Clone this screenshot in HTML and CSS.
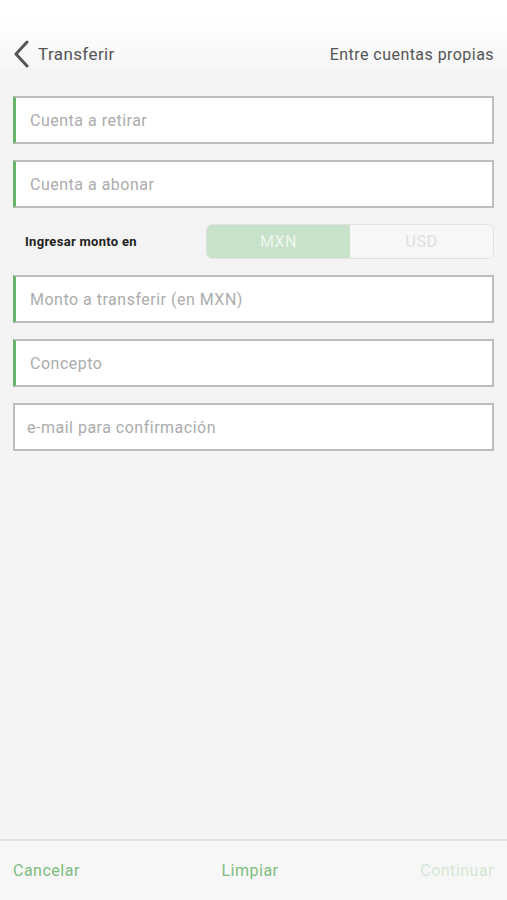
FILE: index.html
```html
<!DOCTYPE html>
<html lang="es">
<head>
    <meta charset="UTF-8">
    <meta name="viewport" content="width=device-width, initial-scale=1.0">
    <title>Transferir</title>
    <link rel="stylesheet" href="styles.css">
</head>
<body>
    <div class="page">
        <div class="topbar">
            <a class="back" href="#">
                <svg width="18" height="28" viewBox="0 0 18 28">
                    <path d="M15 2 L4 14 L15 26" fill="none" stroke="#555" stroke-width="3" stroke-linecap="round" stroke-linejoin="round"/>
                </svg>
                <span>Transferir</span>
            </a>
            <span class="subtitle">Entre cuentas propias</span>
        </div>

        <form class="form">
            <input class="field required" type="text" placeholder="Cuenta a retirar">
            <input class="field required" type="text" placeholder="Cuenta a abonar">

            <div class="currency-row">
                <span class="currency-label">Ingresar monto en</span>
                <div class="toggle">
                    <button type="button" class="toggle-opt active">MXN</button>
                    <button type="button" class="toggle-opt">USD</button>
                </div>
            </div>

            <input class="field required" type="text" placeholder="Monto a transferir (en MXN)">
            <input class="field required" type="text" placeholder="Concepto">
            <input class="field" type="email" placeholder="e-mail para confirmación">
        </form>

        <div class="footer">
            <a href="#" class="action">Cancelar</a>
            <a href="#" class="action">Limpiar</a>
            <a href="#" class="action disabled">Continuar</a>
        </div>
    </div>
</body>
</html>
```

FILE: styles.css
```css
body {
    margin: 0;
    font-family: Roboto, "Liberation Sans", sans-serif;
    background-color: #f4f4f4;
}

.page {
    min-height: 900px;
    display: flex;
    flex-direction: column;
}

/* header */
.topbar {
    background: linear-gradient(#ffffff 0px, #ffffff 18px, #f4f4f4 80px);
    padding: 40px 13px 0 12px;
    height: 28px;
    display: flex;
    align-items: center;
    justify-content: space-between;
}

.back {
    display: flex;
    align-items: center;
    gap: 8px;
    color: #555;
    text-decoration: none;
    font-size: 17px;
    letter-spacing: 0.4px;
}

.back svg {
    display: block;
}

.subtitle {
    color: #555;
    font-size: 16px;
    letter-spacing: 0.45px;
}

/* form */
.form {
    padding: 28px 13px 0 13px;
    display: flex;
    flex-direction: column;
    gap: 16px;
}

.field {
    box-sizing: border-box;
    height: 48px;
    width: 100%;
    border: 2px solid #bdbdbd;
    background: #fff;
    padding: 0 12px;
    font-family: inherit;
    font-size: 16px;
    letter-spacing: 0.5px;
    color: #333;
    outline: none;
}

.field.required {
    border-left: 3px solid #68b46b;
    padding-left: 14px;
}

.field::placeholder {
    color: #acacac;
}

.currency-row {
    display: flex;
    align-items: center;
    justify-content: space-between;
    height: 35px;
    padding-left: 12px;
}

.currency-label {
    font-size: 13px;
    font-weight: bold;
    letter-spacing: 0.3px;
    color: #222;
}

.toggle {
    display: flex;
    width: 288px;
    height: 35px;
    border: 1px solid #e2e2e2;
    border-radius: 6px;
    overflow: hidden;
    box-sizing: border-box;
}

.toggle-opt {
    flex: 1;
    border: none;
    background: #f7f7f7;
    color: #dedede;
    font-family: inherit;
    font-size: 16px;
    letter-spacing: 0.5px;
}

.toggle-opt.active {
    background: #c8e2ca;
    color: #eef7ee;
}

/* bottom actions */
.footer {
    margin-top: auto;
    height: 59px;
    border-top: 2px solid #e2e2e2;
    background: #f7f7f7;
    padding: 0 13px;
    display: flex;
    align-items: center;
    justify-content: space-between;
}

.action {
    color: #7dbd80;
    text-decoration: none;
    font-size: 16px;
    letter-spacing: 0.5px;
}

.action.disabled {
    color: #d3e8d4;
}
```
